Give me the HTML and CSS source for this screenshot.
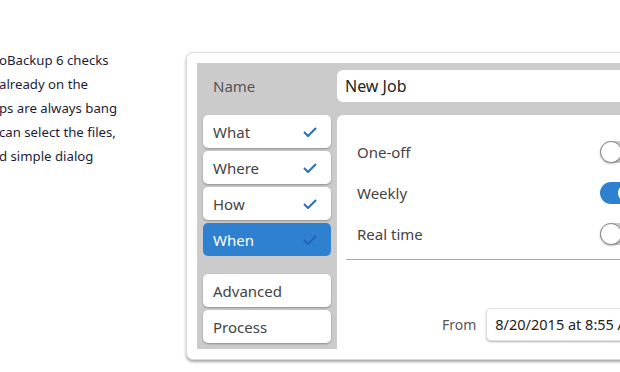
FILE: index.html
```html
<!DOCTYPE html>
<html lang="en">
<head>
  <meta charset="UTF-8" />
  <title>New Job</title>
  <link rel="stylesheet" href="styles.css">
</head>
<body>
  <div class="intro">
    <p>oBackup 6 checks<br>already on the<br>ps are always bang<br>can select the files,<br>d simple dialog</p>
  </div>

  <div class="window">
    <div class="panel">
      <div class="name-label">Name</div>
      <div class="name-field"><div class="input">New Job</div></div>

      <div class="sidebar">
        <div class="tab">What <svg class="check" viewBox="0 0 14 10"><path d="M1 5 L5 9 L13 1"/></svg></div>
        <div class="tab">Where <svg class="check" viewBox="0 0 14 10"><path d="M1 5 L5 9 L13 1"/></svg></div>
        <div class="tab">How <svg class="check" viewBox="0 0 14 10"><path d="M1 5 L5 9 L13 1"/></svg></div>
        <div class="tab active">When <svg class="check" viewBox="0 0 14 10"><path d="M1 5 L5 9 L13 1"/></svg></div>
        <div class="tab extra">Advanced</div>
        <div class="tab">Process</div>
      </div>

      <div class="content">
        <div class="row"><span>One-off</span><span class="toggle"><span class="knob"></span></span></div>
        <div class="row"><span>Weekly</span><span class="toggle on"><span class="knob"></span></span></div>
        <div class="row"><span>Real time</span><span class="toggle"><span class="knob"></span></span></div>
        <div class="divider"></div>
        <div class="from-row">
          <span class="from">From</span>
          <div class="input date">8/20/2015 at 8:55 AM</div>
        </div>
      </div>
    </div>
  </div>
</body>
</html>
```

FILE: styles.css
```css
body {
  margin: 0;
  width: 620px;
  height: 372px;
  overflow: hidden;
  display: flex;
  background: #fff;
  font-family: 'Noto Sans', 'Open Sans', sans-serif;
}

.intro {
  flex: 0 0 186px;
}

.intro p {
  margin: 48px 0 0 -1px;
  font-size: 13.2px;
  line-height: 24px;
  color: #1c1c3a;
  white-space: nowrap;
}

.window {
  flex: 0 0 470px;
  margin-top: 52px;
  height: 286px;
  padding: 10px;
  border: 1px solid #dcdcdc;
  border-radius: 7px;
  box-shadow: 0 2px 3px rgba(0, 0, 0, 0.35);
  background: #fff;
}

.panel {
  height: 100%;
  background: #cbcbcb;
  display: grid;
  grid-template-columns: 140px 1fr;
  grid-template-rows: 52px 1fr;
}

.name-label {
  padding-left: 16px;
  font-size: 15px;
  color: #555;
  line-height: 46px;
}

.name-field {
  padding-top: 7px;
}

.input {
  height: 32px;
  line-height: 32px;
  padding-left: 8px;
  background: #fff;
  border-radius: 6px 0 0 6px;
  font-size: 16px;
  color: #222;
}

.sidebar {
  padding: 0 6px 6px;
  display: flex;
  flex-direction: column;
  gap: 3px;
}

.tab {
  height: 33px;
  box-sizing: border-box;
  padding: 0 14px 0 10px;
  display: flex;
  align-items: center;
  justify-content: space-between;
  background: #fff;
  border-radius: 5px;
  box-shadow: 0 1px 2px rgba(0, 0, 0, 0.3);
  font-size: 15px;
  color: #444;
}

.tab.active {
  background: #2e80d0;
  color: #fff;
  box-shadow: none;
}

.tab.extra {
  margin-top: 15px;
}

.check {
  width: 14px;
  height: 10px;
  fill: none;
  stroke: #2b6cb4;
  stroke-width: 2;
}

.tab.active .check {
  stroke: #2264ad;
}

.content {
  background: #fff;
  border-top-left-radius: 6px;
  margin-bottom: -10px;
  padding-top: 16px;
}

.row {
  height: 41px;
  padding-left: 20px;
  display: grid;
  grid-template-columns: 243px auto;
  align-items: center;
  font-size: 15px;
  color: #444;
}

.toggle {
  position: relative;
  width: 38px;
  height: 22px;
  box-sizing: border-box;
  border-radius: 11px;
  background: #c9c9c9;
}

.knob {
  position: absolute;
  left: 0;
  top: 0;
  width: 20px;
  height: 20px;
  border: 1px solid #8a8a8a;
  border-radius: 50%;
  background: #fff;
  box-shadow: 0 1px 2px rgba(0, 0, 0, 0.25);
}

.toggle.on {
  background: #2e80d0;
}

.toggle.on .knob {
  left: 18px;
  top: 2px;
  width: 18px;
  height: 18px;
  border: none;
  box-shadow: none;
}

.divider {
  margin: 5px 0 0 9px;
  height: 1px;
  background: #aaa;
}

.from-row {
  margin-top: 48px;
  padding-left: 105px;
  display: flex;
  align-items: center;
  gap: 10px;
}

.from {
  font-size: 14px;
  color: #555;
}

.input.date {
  width: 200px;
  height: 31px;
  line-height: 31px;
  border-radius: 5px;
  box-shadow: 0 1px 2px rgba(0, 0, 0, 0.3);
  border: 1px solid #e4e4e4;
  font-size: 14.5px;
}
```
